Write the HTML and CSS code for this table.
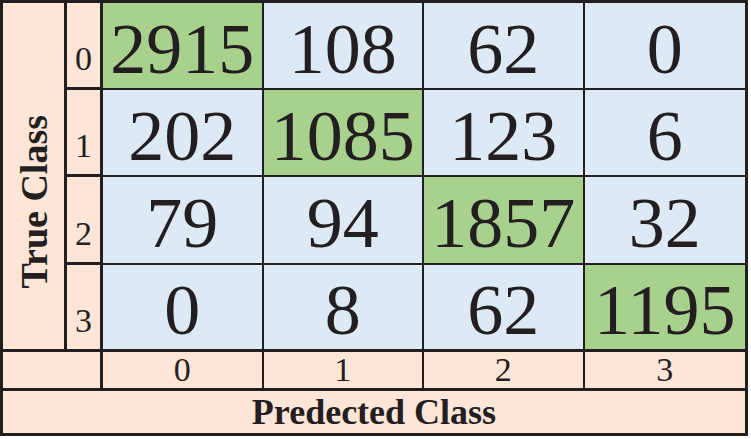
FILE: index.html
```html
<!DOCTYPE html>
<html lang="en">
<head>
  <meta charset="UTF-8"/>
  <meta name="viewport" content="width=device-width,initial-scale=1.0"/>
  <title>Confusion Matrix</title>
  <link rel="stylesheet" href="styles.css">
</head>
<body>

  <div class="matrix">
    <!-- y axis title -->
    <div class="axis-y"><span>True Class</span></div>

    <!-- row 0 -->
    <div class="row-label">0</div>
    <div class="cell hit">2915</div>
    <div class="cell">108</div>
    <div class="cell">62</div>
    <div class="cell last-col">0</div>

    <!-- row 1 -->
    <div class="row-label">1</div>
    <div class="cell">202</div>
    <div class="cell hit">1085</div>
    <div class="cell">123</div>
    <div class="cell last-col">6</div>

    <!-- row 2 -->
    <div class="row-label">2</div>
    <div class="cell">79</div>
    <div class="cell">94</div>
    <div class="cell hit">1857</div>
    <div class="cell last-col">32</div>

    <!-- row 3 -->
    <div class="row-label">3</div>
    <div class="cell last-row">0</div>
    <div class="cell last-row">8</div>
    <div class="cell last-row">62</div>
    <div class="cell last-row last-col hit">1195</div>

    <!-- column labels -->
    <div class="corner"></div>
    <div class="col-label">0</div>
    <div class="col-label">1</div>
    <div class="col-label">2</div>
    <div class="col-label last-col">3</div>

    <!-- x axis title -->
    <div class="axis-x">Predected Class</div>
  </div>

</body>
</html>
```

FILE: styles.css
```css
:root {
  --ink:   #231f20;
  --peach: #fde5d8;
  --blue:  #ddeaf6;
  --green: #a9d18e;
}
* { margin:0; padding:0; box-sizing:border-box; }
html, body {
  background:#ffffff;
  font-family:'Liberation Serif','Times New Roman',serif;
  color:var(--ink);
}

/* ─── MATRIX GRID ──────────────────── */
.matrix {
  width:748px; height:436px;
  border:3px solid var(--ink);
  background:var(--peach);
  display:grid;
  grid-template-columns:64px 36px repeat(4, 1fr);
  grid-template-rows:87px 87px 88px 87px 39px 1fr;
}

.axis-y {
  grid-column:1; grid-row:1 / 5;
  border-right:3px solid var(--ink);
  border-bottom:3px solid var(--ink);
  display:flex; align-items:center; justify-content:center;
  padding-top:52px;
}
.axis-y span {
  writing-mode:vertical-rl; transform:rotate(180deg);
  font-weight:700; font-size:38px; line-height:1;
  white-space:nowrap;
}

.row-label {
  grid-column:2;
  border-right:3px solid var(--ink);
  border-bottom:3px solid var(--ink);
  display:flex; align-items:center; justify-content:center;
  padding-top:28px;
  font-size:34px; line-height:1;
}

.cell {
  background:var(--blue);
  border-right:2px solid var(--ink);
  border-bottom:2px solid var(--ink);
  display:flex; align-items:center; justify-content:center;
  padding-top:6px;
  font-size:72px; line-height:1;
}
.cell.hit { background:var(--green); }
.cell.last-col,
.col-label.last-col { border-right:none; }
.cell.last-row { border-bottom:3px solid var(--ink); }

/* ─── COLUMN LABELS ────────────────── */
.corner {
  grid-column:1 / 3;
  border-right:3px solid var(--ink);
  border-bottom:3px solid var(--ink);
}
.col-label {
  border-right:2px solid var(--ink);
  border-bottom:3px solid var(--ink);
  display:flex; align-items:center; justify-content:center;
  font-size:34px; line-height:1;
}

.axis-x {
  grid-column:1 / -1;
  display:flex; align-items:center; justify-content:center;
  font-weight:700; font-size:36px; line-height:1;
}
```
